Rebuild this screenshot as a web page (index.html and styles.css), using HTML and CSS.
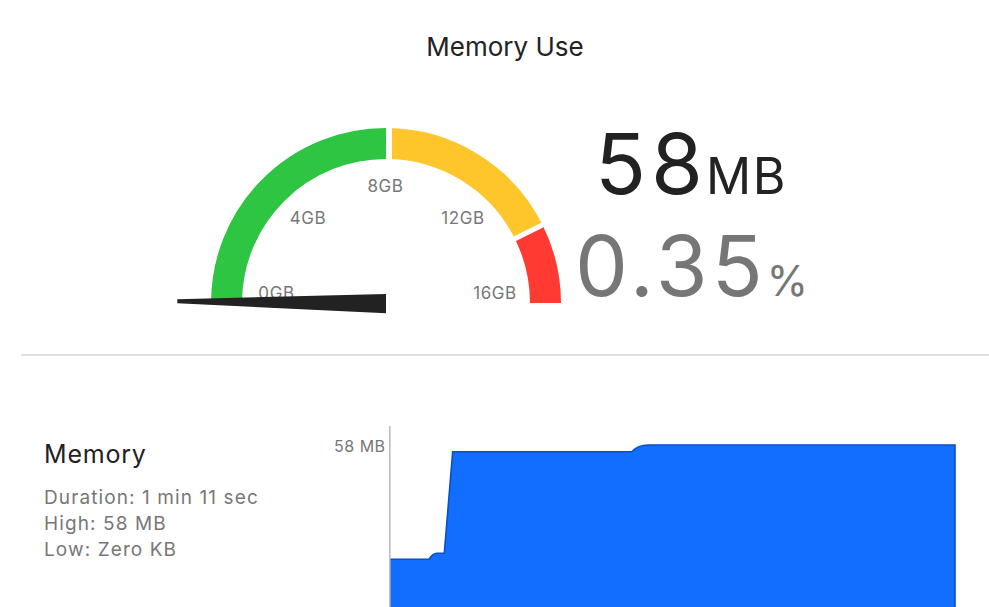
FILE: index.html
```html
<!DOCTYPE html>
<html lang="en">
<head>
  <meta charset="UTF-8">
  <meta name="viewport" content="width=device-width, initial-scale=1.0">
  <title>Memory Use</title>
  <link rel="stylesheet" href="styles.css">
</head>
<body>
  <div class="page">

    <h1 class="title">Memory Use</h1>

    <div class="gauge-row">
      <svg class="gauge" width="390" height="192" viewBox="0 0 390 192">
        <!-- arcs: center (210,179), r 159.5 -->
        <path d="M50.5 179 A159.5 159.5 0 0 1 210 19.5" stroke="#2dc541" stroke-width="31" fill="none"/>
        <path d="M210 19.5 A159.5 159.5 0 0 1 352.7 107.8" stroke="#ffc62b" stroke-width="31" fill="none"/>
        <path d="M352.7 107.8 A159.5 159.5 0 0 1 369.5 179" stroke="#fe3a33" stroke-width="31" fill="none"/>
        <!-- segment gaps -->
        <line x1="213" y1="0" x2="213" y2="40" stroke="#fff" stroke-width="6"/>
        <line x1="326.3" y1="121" x2="385" y2="91.8" stroke="#fff" stroke-width="5"/>

        <g class="ticks">
          <text x="100.5" y="175">0GB</text>
          <text x="132" y="100">4GB</text>
          <text x="209.5" y="68">8GB</text>
          <text x="287" y="100">12GB</text>
          <text x="319" y="175">16GB</text>
        </g>

        <polygon points="1.3,175.3 210,170 210,189.3 1.3,179.3" fill="#222"/>
      </svg>

      <div class="readout">
        <div class="used">58<span class="unit">MB</span></div>
        <div class="percent">0.35<span class="unit-pct">%</span></div>
      </div>
    </div>

    <div class="divider"></div>

    <div class="stats">
      <div class="info">
        <h2>Memory</h2>
        <p>Duration: 1 min 11 sec</p>
        <p>High: 58 MB</p>
        <p>Low: Zero KB</p>
      </div>
      <div class="axis-label">58 MB</div>
      <svg class="chart" width="600" height="190" viewBox="0 0 600 190">
        <path d="M0 133.3 L40 133.3 Q44 127.3 47.7 127.3 L55.3 127.3 L63.7 25.7 L242.7 25.7 Q249 19 259 19 L566 19 L566 200 L0 200 Z" fill="#116eff"/>
        <path d="M0 133.3 L40 133.3 Q44 127.3 47.7 127.3 L55.3 127.3 L63.7 25.7 L242.7 25.7 Q249 19 259 19 L566 19 L566 200" stroke="#0a4fc4" stroke-width="1.6" fill="none"/>
        <line x1="0.8" y1="0" x2="0.8" y2="190" stroke="#bcbcbc" stroke-width="1.6"/>
      </svg>
    </div>

  </div>
</body>
</html>
```

FILE: styles.css
```css
body {
  margin: 0;
  font-family: Inter, "Noto Sans", sans-serif;
  background-color: #fff;
  color: #222;
  overflow: hidden;
}
.page {
  padding-left: 21px;
}
.title {
  margin: 0;
  padding-top: 30px;
  font-size: 26px;
  line-height: 34px;
  font-weight: 400;
  text-align: center;
}
.gauge-row {
  display: flex;
  align-items: flex-start;
  margin-top: 60px;
  padding-left: 155px;
}
.gauge {
  display: block;
  flex: 0 0 auto;
}
.ticks text {
  font-family: Inter, "Noto Sans", sans-serif;
  font-size: 17px;
  letter-spacing: 0.6px;
  fill: #777;
  text-anchor: middle;
}
.readout {
  width: 232px;
  margin-left: 9px;
  text-align: center;
  white-space: nowrap;
}
.used {
  margin-top: -2px;
  font-size: 84px;
  line-height: 84px;
  letter-spacing: 5px;
  color: #222;
}
.unit {
  font-size: 50px;
  line-height: 1;
  letter-spacing: 1.5px;
  margin-left: -2px;
}
.percent {
  margin-top: 18px;
  font-size: 84px;
  line-height: 84px;
  letter-spacing: 4px;
  color: #767676;
}
.unit-pct {
  font-size: 42px;
  line-height: 1;
  letter-spacing: 0;
}
.divider {
  height: 2px;
  margin-top: 38px;
  background-color: #e0e0e0;
}
.stats {
  display: flex;
  align-items: flex-start;
  padding-top: 70px;
}
.info {
  flex: 0 0 290px;
  padding-left: 23px;
  padding-top: 13px;
}
.info h2 {
  margin: 0 0 16px;
  font-size: 25px;
  line-height: 30px;
  font-weight: 400;
  letter-spacing: 0.8px;
  color: #222;
}
.info p {
  margin: 0;
  font-size: 19px;
  line-height: 26px;
  letter-spacing: 1.1px;
  color: #777;
}
.axis-label {
  width: 48px;
  padding-top: 11px;
  font-size: 16px;
  line-height: 18px;
  letter-spacing: 0.5px;
  color: #777;
  text-align: right;
  white-space: nowrap;
}
.chart {
  display: block;
  margin-left: 7px;
  flex: 0 0 auto;
}
```
